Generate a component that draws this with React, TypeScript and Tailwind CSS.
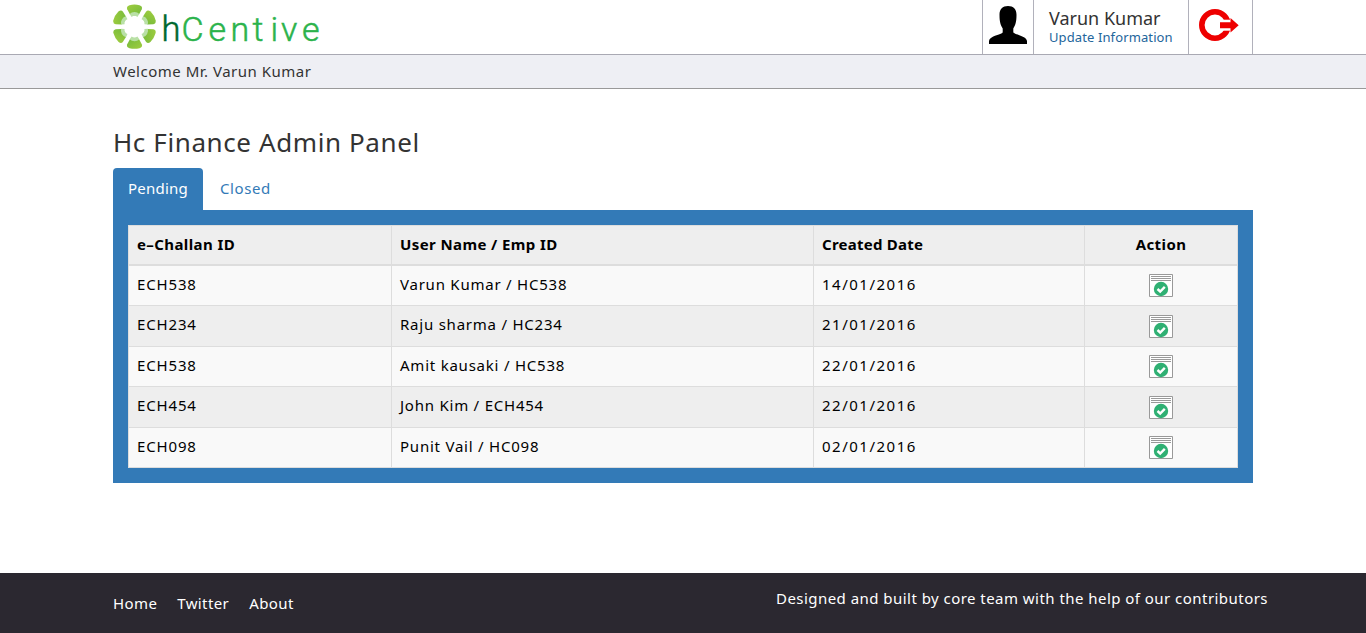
const rows = [
  { id: "ECH538", user: "Varun Kumar / HC538", date: "14/01/2016", cls: "h-[40px] bg-[#f9f9f9]", pad: "pt-2" },
  { id: "ECH234", user: "Raju sharma / HC234", date: "21/01/2016", cls: "h-[41px] bg-[#eeeeee]", pad: "pt-[9px]" },
  { id: "ECH538", user: "Amit kausaki / HC538", date: "22/01/2016", cls: "h-[40px] bg-[#f9f9f9]", pad: "pt-2" },
  { id: "ECH454", user: "John Kim / ECH454", date: "22/01/2016", cls: "h-[41px] bg-[#eeeeee]", pad: "pt-[9px]" },
  { id: "ECH098", user: "Punit Vail / HC098", date: "02/01/2016", cls: "h-[40px] bg-[#f9f9f9]", pad: "pt-2" },
];

const columns = "grid grid-cols-[263px_422px_271px_153px] border-l border-[#dddddd]";
const cell = "border-r border-[#dddddd] pl-2 leading-[36px]";

function Logo() {
  return (
    <svg width="210" height="50" viewBox="0 0 210 50" className="shrink-0">
      <defs>
        <linearGradient id="leaf" x1="0" y1="0" x2="1" y2="1">
          <stop offset="0" stopColor="#a0cd3f" />
          <stop offset="1" stopColor="#72b93b" />
        </linearGradient>
      </defs>
      <g transform="translate(21.500 26.700)">
        {[0, 60, 120, 180, 240, 300].map((a) => (
          <g key={a} transform={`rotate(${a})`}>
            <path d="M-5-21.500Q0-22.800 5-21.500Q8.400-20.300 7.300-17.500L4.600-12.500Q0-10-4.600-12.500L-7.300-17.500Q-8.400-20.300-5-21.500Z" fill="url(#leaf)" />
            <path d="M-4.800-12.600Q-3-14.600 0-14.600Q3-14.600 4.800-12.600L2.900-9.800Q0-12-2.900-9.800Z" fill="#b9e0a6" />
          </g>
        ))}
      </g>
      <g className="font-[Roboto,sans-serif] font-light tracking-normal" fill="#2bb34b" stroke="#2bb34b" strokeWidth="0.500">
        <text x="48.500" y="40.700" fontSize="34.500" fill="#00682f" stroke="#00682f">h</text>
        <text x="68.500 95.500 117.500 139.500 157.500 168 189" y="40.700" fontSize="34">Centive</text>
      </g>
    </svg>
  );
}

function Person() {
  return (
    <svg width="38" height="38" viewBox="0 0 38 38">
      <path d="M19 0C24.500 0 27.600 3 27.500 9C27.500 16 26.300 19.500 24.300 22.500V26.500C27 29 37.500 30 38 35V38H0V35C.5 30 11 29 13.700 26.500V22.500C11.700 19.500 10.500 16 10.500 9C10.400 3 13.500 0 19 0Z" fill="#000" />
    </svg>
  );
}

function SignOut() {
  return (
    <svg width="40" height="32" viewBox="0 0 40 32">
      <circle cx="16" cy="16" r="13.200" fill="none" stroke="#ee0000" strokeWidth="5.600" />
      <path d="M20 10.700H34V21.700H20Z" fill="#fff" />
      <path d="M21 13.200H31.500V9L39.700 16.200L31.500 23.400V19.200H21Z" fill="#ee0000" />
    </svg>
  );
}

function Approve() {
  return (
    <svg width="24" height="23" viewBox="0 0 24 23">
      <path d="M.5.5H23.500V22.500H.5Z" fill="#fff" stroke="#999" />
      <path d="M2 2.500H22M2 4.500H22M2 6.500H22" stroke="#999" />
      <circle cx="12" cy="15" r="7.200" fill="#2fb073" />
      <path d="M8.500 15L11.200 17.500L15.800 12.800" fill="none" stroke="#fff" strokeWidth="2.400" />
    </svg>
  );
}

export default function App() {
  return (
    <div className="flex h-[633px] w-[1366px] flex-col overflow-hidden bg-white font-['Noto_Sans',sans-serif] text-[15px] tracking-[0.5px] text-[#333333]">
      <header className="flex h-[55px] shrink-0 justify-between border-b border-[#a9a9b3] px-[113px]">
        <Logo />
        <div className="flex">
          <div className="w-[51px] border-l border-[#b1b1bb] pt-1.5 pl-1.5">
            <Person />
          </div>
          <div className="w-[155px] border-l border-[#b1b1bb] pt-2 pl-[15px]">
            <div className="text-[18px] leading-[21px] tracking-[0px] whitespace-nowrap">Varun Kumar</div>
            <div className="text-[13px] leading-[17px] tracking-[0.110px] whitespace-nowrap text-[#23659b]">Update Information</div>
          </div>
          <div className="w-[65px] border-x border-[#b1b1bb] pt-[9px] pl-[10px]">
            <SignOut />
          </div>
        </div>
      </header>
      <div className="h-[34px] shrink-0 border-b border-[#999999] bg-[#eeeff4] pl-[113px] leading-[33px]">
        Welcome Mr. Varun Kumar
      </div>
      <main className="h-[484px] shrink-0 px-[113px] pt-[36px]">
        <h1 className="h-[43px] text-[26px] leading-[34px] tracking-[0.600px]">Hc Finance Admin Panel</h1>
        <nav className="flex h-[42px] leading-[41px]">
          <span className="w-[90px] rounded-t bg-[#337ab7] pl-[15px] tracking-[0.220px] text-white">Pending</span>
          <span className="pl-[17px] tracking-[0.600px] text-[#337ab7]">Closed</span>
        </nav>
        <section className="h-[273px] bg-[#337ab7] p-[15px] text-black">
          <div className={`${columns} h-[41px] border-t border-b-2 bg-[#eeeeee] font-bold tracking-[0.400px]`}>
            <span className={cell}>e–Challan ID</span>
            <span className={cell}>User Name / Emp ID</span>
            <span className={`${cell} tracking-[0.250px]`}>Created Date</span>
            <span className="border-r border-[#dddddd] text-center leading-[36px]">Action</span>
          </div>
          {rows.map((r, i) => (
            <div key={i} className={`${columns} ${r.cls} border-b`}>
              <span className={`${cell} tracking-[0.850px]`}>{r.id}</span>
              <span className={`${cell} tracking-[0.770px]`}>{r.user}</span>
              <span className={`${cell} tracking-[1.500px]`}>{r.date}</span>
              <span className={`flex justify-center border-r border-[#dddddd] ${r.pad}`}>
                <Approve />
              </span>
            </div>
          ))}
        </section>
      </main>
      <footer className="flex h-[60px] shrink-0 justify-between bg-[#2b2830] pr-[98px] pl-[113px] text-white">
        <nav className="flex gap-5 leading-[61px] tracking-[0.390px]">
          <span>Home</span>
          <span>Twitter</span>
          <span>About</span>
        </nav>
        <span className="leading-[51px] tracking-[0.460px]">Designed and built by core team with the help of our contributors</span>
      </footer>
    </div>
  );
}
